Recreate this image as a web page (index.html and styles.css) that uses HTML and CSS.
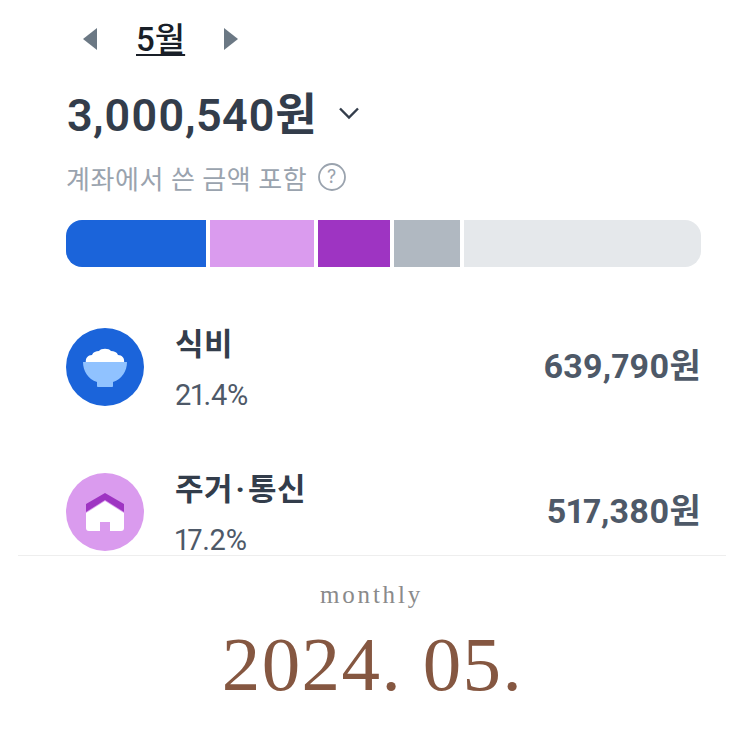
FILE: index.html
```html
<!DOCTYPE html>
<html lang="ko">
<head>
<meta charset="utf-8">
<title>2024. 05.</title>
<link rel="stylesheet" href="styles.css">
</head>
<body>
<main class="shot">
  <section class="app">
    <div class="month-nav">
      <svg class="arrow" width="16" height="24" viewBox="0 0 16 24"><path d="M15 1 1 12l14 11z" fill="#6b7884"/></svg>
      <span class="month">5월</span>
      <svg class="arrow" width="16" height="24" viewBox="0 0 16 24"><path d="M1 1l14 11L1 23z" fill="#6b7884"/></svg>
    </div>
    <div class="total">
      <span class="total-value">3,000,540원</span>
      <svg class="chevron" width="22" height="14" viewBox="0 0 22 14"><path d="M2 2.500 11 11.500 20 2.500" fill="none" stroke="#333d4b" stroke-width="2.400"/></svg>
    </div>
    <div class="note">
      <span>계좌에서 쓴 금액 포함</span>
      <svg width="30" height="30" viewBox="0 0 30 30"><circle cx="15" cy="15" r="13" fill="none" stroke="#9aa3ae" stroke-width="1.800"/><text x="15" y="21" text-anchor="middle" class="q">?</text></svg>
    </div>
    <div class="bar">
      <div class="seg seg-a"></div>
      <div class="seg seg-b"></div>
      <div class="seg seg-c"></div>
      <div class="seg seg-d"></div>
      <div class="seg seg-e"></div>
    </div>
    <div class="row row-first">
      <svg class="icon" width="78" height="78" viewBox="0 0 78 78">
        <circle cx="39" cy="39" r="39" fill="#1b64da"/>
        <path d="M20 35c-1-5 2-8 6-8 1-3 4-4 7-4 2-3 10-3 12 0 3 0 6 1 7 4 4 0 7 3 6 8z" fill="#fff"/>
        <path d="M17 34h44c0 9-5 17-14 20v4c0 1-1 1-1 1H32s-1 0-1-1v-4c-9-3-14-11-14-20z" fill="#90c2ff"/>
      </svg>
      <div class="labels">
        <span class="name">식비</span>
        <span class="pct">21.4%</span>
      </div>
      <span class="amount">639,790원</span>
    </div>
    <div class="row">
      <svg class="icon" width="78" height="78" viewBox="0 0 78 78">
        <circle cx="39" cy="39" r="39" fill="#da9bee"/>
        <path d="M20 40 39 28l19 12v15c0 2-1 3-3 3H44V49H34v9H23c-2 0-3-1-3-3z" fill="#fff"/>
        <path d="M20 31 39 20l19 11v8L39 27 20 39z" fill="#9e34c2"/>
      </svg>
      <div class="labels">
        <span class="name">주거<span class="dot">·</span>통신</span>
        <span class="pct">17.2%</span>
      </div>
      <span class="amount">517,380원</span>
    </div>
  </section>
  <footer class="caption">
    <div class="eyebrow">monthly</div>
    <div class="date">2024. 05.</div>
  </footer>
</main>
</body>
</html>
```
FILE: styles.css
```css
* { box-sizing: border-box; }
html, body { margin: 0; background: #fff; }
body { font-family: Roboto, "Noto Sans CJK KR", sans-serif; font-variant-numeric: proportional-nums; }
.shot { width: 743px; height: 743px; overflow: hidden; display: flex; flex-direction: column; align-items: center; }
.app { width: 743px; height: 555px; overflow: hidden; padding: 0 42px 0 66px; flex: none; }
.month-nav { display: flex; align-items: center; height: 78px; padding-left: 16px; }
.month { font-size: 33px; font-weight: 500; color: #191f28; text-decoration: underline; text-decoration-thickness: 2px; text-underline-offset: 3px; margin: 0 38px; position: relative; top: -2px; }
.total { display: flex; align-items: center; height: 70px; margin-top: -2px; padding-left: 1px; }
.total-value { font-size: 45px; font-weight: 600; color: #333d4b; letter-spacing: 0.4px; }
.chevron { margin-left: 21px; margin-top: 4px; }
.note { display: flex; align-items: center; gap: 10px; height: 62px; font-size: 26px; color: #9aa3ae; letter-spacing: 0.55px; }
.q { font-size: 18px; font-family: Inter, sans-serif; fill: #9aa3ae; }
.bar { display: flex; gap: 4px; height: 47px; margin-top: 12px; border-radius: 16px; overflow: hidden; width: 635px; }
.seg { height: 100%; }
.seg-a { width: 140px; background: #1b64da; }
.seg-b { width: 104px; background: #da9bee; }
.seg-c { width: 72px; background: #9e34c2; }
.seg-d { width: 65.500px; background: #b0b8c1; }
.seg-e { flex: 1; background: #e5e8eb; }
.row { display: flex; align-items: center; height: 78px; margin-top: 67px; }
.row-first { margin-top: 61px; }
.icon { flex: none; }
.labels { display: flex; flex-direction: column; margin-left: 31px; gap: 15px; padding-top: 2px; }
.name { font-size: 31px; font-weight: 700; color: #333d4b; line-height: 38px; letter-spacing: 0.5px; }
.dot { margin: 0 2.500px; }
.pct { font-size: 29px; color: #4e5968; line-height: 32px; letter-spacing: -0.2px; }
.amount { margin-left: auto; font-size: 34px; font-weight: 700; color: #4e5968; letter-spacing: 0.1px; position: relative; top: -4px; }
.caption { width: 708px; flex: 1; border-top: 1px solid #eeeeee; display: flex; flex-direction: column; align-items: center; }
.eyebrow { font-family: "Liberation Serif", serif; font-size: 25px; letter-spacing: 2.800px; color: #8a8a8a; margin-top: 24px; line-height: 30px; }
.date { font-family: "Liberation Serif", serif; font-size: 77px; color: #855741; letter-spacing: 1.400px; line-height: 90px; margin-top: 9px; padding-left: 2px; }
```
